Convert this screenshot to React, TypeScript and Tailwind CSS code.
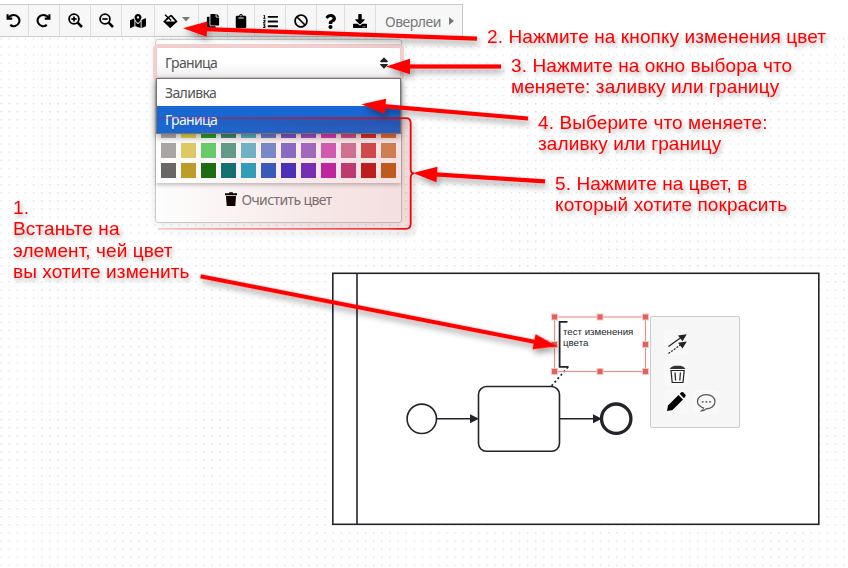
import React from 'react';
import {
  FaBan, FaClipboard, FaCopy, FaDownload, FaListOl, FaMapMarkedAlt, FaQuestion, FaSort,
} from 'react-icons/fa';

const UndoIcon = ({ className = '' }: { className?: string }) => (
  <svg width="15" height="15" viewBox="0 0 15 15" fill="none" stroke="#000" strokeWidth="2.1" className={className}>
    <path d="M1.6 1.2V5.6H6.2" />
    <path d="M2 5.4C3.4 3 5.6 2 7.8 2A5.6 5.6 0 1 1 4.2 11.9" />
  </svg>
);

const ZoomIcon = ({ plus = false }: { plus?: boolean }) => (
  <svg width="15" height="15" viewBox="0 0 15 15" fill="none" stroke="#000" strokeWidth="1.8">
    <circle cx="6" cy="6" r="4.9" />
    <path d="M9.6 9.6L14 14" strokeWidth="2.5" />
    <path d="M3.4 6H8.6" strokeWidth="1.7" />
    {plus && <path d="M6 3.4V8.6" strokeWidth="1.7" />}
  </svg>
);

const BucketIcon = () => (
  <svg width="15" height="15" viewBox="0 0 15 15" fill="none" stroke="#000" strokeWidth="1.7" className="mt-px">
    <path d="M8 1.4L13.4 7.4L7.2 12.8L1.4 7.4L6 3.2" />
    <path d="M2 0.8L8.2 6.6M8.2 1.2L3.4 5.6" strokeWidth="1.4" />
    <path d="M1 7.4H14L7.2 14Z" fill="#000" stroke="none" />
  </svg>
);

const TrashIcon = () => (
  <svg width="12" height="14" viewBox="0 0 12 14" fill="#0a0000">
    <path d="M0 1.2H4L4.4 0.2H7.6L8 1.2H12V3.2H0Z" />
    <path d="M1 4H11L10.3 14H1.7Z" />
  </svg>
);

const tools: { width: string; icon: React.ReactNode }[] = [
  { width: 'w-[29px]', icon: <UndoIcon className="-ml-0.5" /> },
  { width: 'w-[31px]', icon: <UndoIcon className="-ml-px -scale-x-100" /> },
  { width: 'w-[31px]', icon: <ZoomIcon plus /> },
  { width: 'w-[31px]', icon: <ZoomIcon /> },
  { width: 'w-[33px]', icon: <FaMapMarkedAlt size={16} className="mt-px" /> },
  {
    width: 'w-[44px]',
    icon: (
      <span className="flex items-center gap-1">
        <BucketIcon />
        <svg width="8" height="5" className="-mt-0.5"><path d="M0 0H8L4 4.5Z" fill="#777" /></svg>
      </span>
    ),
  },
  { width: 'w-[29px]', icon: <FaCopy size={14} className="mt-px" /> },
  { width: 'w-[27px]', icon: <FaClipboard size={14} className="mt-px" /> },
  { width: 'w-[31px]', icon: <FaListOl size={15} className="mt-px" /> },
  { width: 'w-[31px]', icon: <FaBan size={14} className="mt-px" /> },
  { width: 'w-[28px]', icon: <FaQuestion size={15} className="mt-px" /> },
  { width: 'w-[31px]', icon: <FaDownload size={14} className="mt-px" /> },
];

const swatches = [
  ['bg-[#b5b3b3]', 'bg-[#e8dc4c]', 'bg-[#2aa62c]', 'bg-[#3f8f78]', 'bg-[#55bcd4]', 'bg-[#6685dc]', 'bg-[#7c5dd8]', 'bg-[#a355df]', 'bg-[#e43fcd]', 'bg-[#df5597]', 'bg-[#dc3434]', 'bg-[#e4803e]'],
  ['bg-[#a8a6a5]', 'bg-[#dfcc63]', 'bg-[#66d06c]', 'bg-[#60a08f]', 'bg-[#6dbad0]', 'bg-[#7590d2]', 'bg-[#8473d2]', 'bg-[#a070d0]', 'bg-[#d463c2]', 'bg-[#d27ea2]', 'bg-[#d25252]', 'bg-[#d28e5e]'],
  ['bg-[#6a6867]', 'bg-[#bd9e27]', 'bg-[#1a6f12]', 'bg-[#0d7575]', 'bg-[#2ca4c2]', 'bg-[#315fc6]', 'bg-[#4333c4]', 'bg-[#7132c2]', 'bg-[#c029ad]', 'bg-[#be3f7b]', 'bg-[#bf2020]', 'bg-[#c06623]'],
];

function Toolbar() {
  return (
    <div className="flex h-[33px] w-[463px] border border-l-0 border-[#ccc] bg-[#f7f7f7] text-black">
      {tools.map((t, i) => (
        <div key={i} className={`flex shrink-0 items-center justify-center border-r border-[#ddd] ${t.width}`}>{t.icon}</div>
      ))}
      <div className="flex flex-1 items-center pl-[9px] text-[14px] tracking-[-0.5px] text-[#777]">
        <span className="mt-px">Оверлеи</span>
        <svg width="5" height="8" className="ml-[8px] mt-px"><path d="M0 0L5 4L0 8Z" fill="#777" /></svg>
      </div>
    </div>
  );
}

function ColorPanel() {
  return (
    <div className="relative h-[184px] w-[247px] rounded-[3px] border border-[#ccc] bg-[#fdfdfd] pt-[7px] shadow-[0_0_9px_rgba(0,0,0,0.12)]">
      <div className="flex h-[31px] items-center justify-between rounded-[2px] border border-[#ecc] bg-gradient-to-b from-white from-50% to-[#eee] pl-[8px] pr-[9px] text-[14px] tracking-[-0.65px] text-[#555] ring-[3px] ring-[#f3d0cf]">
        <span>Граница</span>
        <FaSort size={14} className="text-[#222]" />
      </div>
      <div className="flex h-[105px] flex-col justify-end gap-[5px] bg-white px-[5px] pb-[5px] shadow-[0_2px_4px_rgba(0,0,0,0.25)]">
        {swatches.map((row, r) => (
          <div key={r} className="flex gap-[5px]">
            {row.map((c) => <span key={c} className={`size-[15px] ${c}`} />)}
          </div>
        ))}
      </div>
      <div className="flex h-[32px] items-center justify-center gap-[4px] text-[14px] tracking-[-0.6px] text-[#777]">
        <TrashIcon />
        <span>Очистить цвет</span>
      </div>
      <div className="absolute left-0 top-[38px] flex h-[56px] w-[245px] flex-col border border-[#767676] bg-white text-[14px] tracking-[-0.65px] text-[#555] shadow-[0_3px_7px_rgba(0,0,0,0.35)]">
        <div className="flex h-[27px] items-center pl-[8px]">Заливка</div>
        <div className="flex flex-1 items-center bg-[#1967d2] pl-[8px] text-white">Граница</div>
      </div>
    </div>
  );
}

function Diagram() {
  const handles = [[554.5, 317], [600, 317], [645.5, 317], [554.5, 344.5], [645.5, 344.5], [554.5, 371.5], [600, 371.5], [645.5, 371.5]];
  return (
    <svg width="848" height="568" className="absolute left-0 top-0" fill="none" stroke="#22242a" strokeWidth="1.6">
      <rect x="332.8" y="273.3" width="486" height="251" fill="#fff" />
      <path d="M357 273V524" />
      <circle cx="421.8" cy="418.8" r="14.7" />
      <rect x="478.5" y="386.5" width="81" height="64.8" rx="8" />
      <path d="M436.5 418.8H472M560 418.8H595" />
      <path d="M470 414.3L479 418.8L470 423.3ZM593 414.3L602 418.8L593 423.3Z" fill="#22242a" stroke="none" />
      <circle cx="616.2" cy="418.7" r="14.7" strokeWidth="3.3" />
      <path d="M568 367L551.5 386" strokeDasharray="2 2.6" strokeWidth="1.7" />
      <path d="M567.5 321.8H559.6V366.8H568.5" strokeWidth="1.8" />
      <rect x="554.5" y="317" width="91" height="54.5" stroke="#e98c86" strokeWidth="1.1" />
      {handles.map(([x, y]) => (
        <rect key={`${x}-${y}`} x={x - 3} y={y - 3} width="6" height="6" fill="#e0625a" stroke="#f5c3c0" strokeWidth="1" />
      ))}
    </svg>
  );
}

function ContextPad() {
  return (
    <div className="absolute left-[650px] top-[316px] h-[112px] w-[90px] rounded-[2px] border border-[#ccc] bg-[#f6f6f6]">
      <svg width="88" height="110" fill="none" stroke="#222">
        <g fill="#f8f8f8" stroke="#fbfbfb">
          <rect x="14" y="14" width="22" height="23" rx="2" />
          <rect x="14" y="44" width="22" height="24" rx="2" />
          <rect x="14" y="74" width="22" height="22" rx="2" />
          <rect x="43" y="74" width="24" height="22" rx="2" />
        </g>
        <path d="M17.5 29.5L30 20.5" strokeWidth="1.2" />
        <path d="M17.5 36.5L30 27.5" strokeWidth="1.2" strokeDasharray="2 1.3" />
        <path d="M35.8 17.2L31.5 24.2L27 18.4ZM35.8 24.6L31.5 31.4L27 25.8Z" fill="#222" stroke="none" />
        <path d="M20 53.5L21.2 65.5H32L33.2 53.5ZM24 55.5L24.6 63.5M29.4 55.5L28.8 63.5" strokeWidth="1.2" />
        <path d="M18.5 52L20.5 50L23.5 48.8H29.7L32.7 50L34.5 52Z" fill="#333" stroke="none" />
        <path d="M17 88.5L27.5 78L32 82.5L21.5 93L16 94Z M28.7 76.8L30.6 75.1Q31.5 74.5 32.5 75.5L34.5 77.8Q35 78.5 34.4 79.3L33 81.2Z" fill="#000" stroke="none" />
        <path d="M50.5 94C51.5 93.3 52.3 92.3 52.5 91C49 89.6 46.5 87.4 46.5 84.8C46.5 80.3 50.3 77.6 55.2 77.6C60.1 77.6 64 80.3 64 84.8C64 89.3 59.5 91.8 55 91.8C54 93 52.5 94 50.5 94Z" stroke="#555" strokeWidth="1.2" />
        <path d="M50.8 84.8H59.8" stroke="#666" strokeWidth="1.7" strokeDasharray="1.7 2" />
      </svg>
    </div>
  );
}

const arrows = [
  { from: [477, 38.7], to: [183, 28.3] },
  { from: [501, 66.5], to: [386, 66.5] },
  { from: [528, 118.5], to: [361.5, 104.3] },
  { from: [545, 181.3], to: [413, 173] },
  { from: [200.5, 276.3], to: [557.5, 346.3] },
];

function Arrows() {
  return (
    <svg width="848" height="568" className="absolute left-0 top-0">
      <defs>
        <filter id="shade" filterUnits="userSpaceOnUse" x="0" y="0" width="848" height="568">
          <feDropShadow dx="2" dy="4" stdDeviation="3.2" floodColor="#000" floodOpacity="0.38" />
        </filter>
        <linearGradient id="tint" gradientUnits="userSpaceOnUse" x1="158" x2="411" y1="0" y2="0">
          <stop offset="0" stopColor="#b40000" stopOpacity="0" />
          <stop offset="0.65" stopColor="#b40000" stopOpacity="0.09" />
          <stop offset="1" stopColor="#b40000" stopOpacity="0.12" />
        </linearGradient>
        <linearGradient id="edge" gradientUnits="userSpaceOnUse" x1="158" x2="411" y1="0" y2="0">
          <stop offset="0" stopColor="#f00000" stopOpacity="0.2" />
          <stop offset="0.9" stopColor="#f00000" stopOpacity="0.75" />
          <stop offset="1" stopColor="#f00000" />
        </linearGradient>
      </defs>
      <rect x="158" y="118" width="253" height="111" rx="4" fill="url(#tint)" />
      <path
        d="M158 118.2H406Q410.7 118.2 410.7 123V169Q410.7 173.3 414 173.3Q410.7 173.3 410.7 178V224Q410.7 228.8 406 228.8H158"
        fill="none" stroke="url(#edge)" strokeWidth="1.8" filter="url(#shade)"
      />
      <g filter="url(#shade)">
        {arrows.map(({ from, to }) => {
          const dx = to[0] - from[0];
          const dy = to[1] - from[1];
          const length = Math.hypot(dx, dy);
          const angle = (Math.atan2(dy, dx) * 180) / Math.PI;
          return (
            <g key={from[0]} transform={`translate(${from[0]} ${from[1]}) rotate(${angle})`} fill="#f00">
              <rect y="-2.1" width={length - 22} height="4.2" />
              <path d={`M${length} 0L${length - 24} -7.7V7.7Z`} />
            </g>
          );
        })}
      </g>
    </svg>
  );
}

const notes = [
  { place: 'left-[13px] top-[197px]', lines: ['1.', 'Встаньте на', 'элемент, чей цвет', 'вы хотите изменить'] },
  { place: 'left-[487px] top-[26px]', lines: ['2. Нажмите на кнопку изменения цвет'] },
  { place: 'left-[511px] top-[55px]', lines: ['3. Нажмите на окно выбора что', 'меняете: заливку или границу'] },
  { place: 'left-[538px] top-[112px]', lines: ['4. Выберите что меняете:', 'заливку или границу'] },
  { place: 'left-[555px] top-[173px]', lines: ['5. Нажмите на цвет, в', 'который хотите покрасить'] },
];

export default function App() {
  return (
    <div className="relative h-[568px] w-[848px] overflow-hidden bg-white font-['Noto_Sans','Open_Sans',sans-serif]">
      <svg width="848" height="568" className="absolute left-0 top-0">
        <defs>
          <pattern id="dots" width="8.1" height="8.1" patternUnits="userSpaceOnUse" x="0.5" y="38.2">
            <circle cx="0.7" cy="0.7" r="0.6" fill="#ccc" />
          </pattern>
        </defs>
        <rect y="37" width="848" height="531" fill="url(#dots)" />
      </svg>
      <div className="relative flex flex-col items-start pt-[4px]">
        <Toolbar />
        <div className="ml-[155px] mt-[2px]"><ColorPanel /></div>
      </div>
      <Diagram />
      <div className="absolute left-[563px] top-[326px] whitespace-nowrap font-['Liberation_Sans',Arial,sans-serif] text-[9.7px] leading-[11px] text-[#22242a]">
        тест изменения<br />цвета
      </div>
      <ContextPad />
      <Arrows />
      {notes.map((n) => (
        <div key={n.place} className={`absolute whitespace-nowrap font-['Liberation_Sans',Arial,sans-serif] text-[19px] leading-[21.4px] tracking-[0.1px] text-[#f00] [text-shadow:2px_3px_4px_rgba(0,0,0,0.3)] ${n.place}`}>
          {n.lines.map((line) => <div key={line}>{line}</div>)}
        </div>
      ))}
    </div>
  );
}
